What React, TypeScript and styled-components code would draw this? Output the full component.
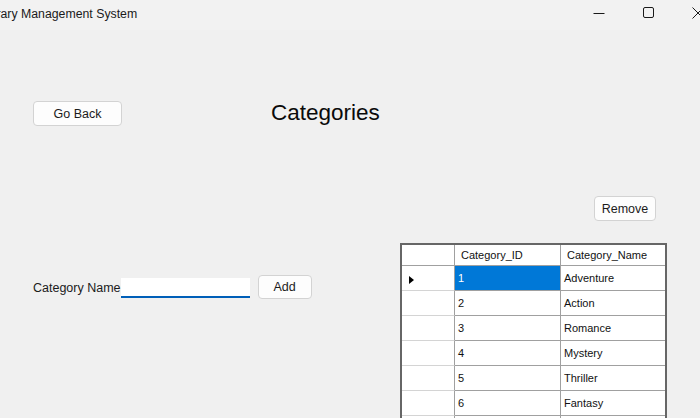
import React from "react";
import styled, { createGlobalStyle } from "styled-components";

const GlobalStyle = createGlobalStyle`
  html, body {
    margin: 0;
    padding: 0;
    background: #f0f0f0;
  }
  body {
    font-family: "Liberation Sans", Arial, sans-serif;
    color: #000;
  }
  * { box-sizing: border-box; }
`;

const Window = styled.div`
  width: 700px;
  height: 418px;
  overflow: hidden;
  background: #f0f0f0;
  display: flex;
  flex-direction: column;
`;

const TitleBar = styled.div`
  height: 30px;
  flex: 0 0 30px;
  display: flex;
  align-items: center;
  background: #f2f2f2;
  overflow: hidden;
`;

const TitleText = styled.div`
  margin-left: -20px;
  margin-top: -2px;
  font-size: 12.3px;
  color: #1a1a1a;
  white-space: nowrap;
  flex: 1;
`;

const Controls = styled.div`
  display: flex;
  margin-right: -22px;
  height: 30px;
`;

const ControlBox = styled.div`
  width: 48px;
  height: 30px;
  display: flex;
  align-items: center;
  justify-content: center;
  margin-top: -2px;
`;

const Body = styled.div`
  flex: 1;
  display: flex;
  flex-direction: column;
  padding: 71px 0 0 33px;
`;

const HeaderRow = styled.div`
  display: flex;
  align-items: center;
  gap: 149px;
`;

const Button = styled.button<{ $w: number; $h: number }>`
  width: ${(p) => p.$w}px;
  height: ${(p) => p.$h}px;
  padding: 0;
  background: #fdfdfd;
  border: 1px solid #d3d3d3;
  border-radius: 4px;
  font-family: "Liberation Sans", Arial, sans-serif;
  font-size: 12.5px;
  color: #1b1b1b;
  flex: 0 0 auto;
`;

const Title = styled.h1`
  margin: 0;
  font-size: 22.5px;
  font-weight: normal;
  color: #0a0a0a;
  line-height: 1;
`;

const ActionRow = styled.div`
  margin-top: 70px;
  display: flex;
  justify-content: flex-end;
  padding-right: 44px;
`;

const Workspace = styled.div`
  margin-top: 22px;
  display: flex;
  align-items: flex-start;
  padding-right: 33px;
`;

const EntryForm = styled.div`
  margin-top: 32px;
  display: flex;
  align-items: center;
`;

const FieldLabel = styled.label`
  font-size: 12.5px;
  color: #1b1b1b;
  white-space: nowrap;
  margin-top: 2px;
`;

const NameInput = styled.input`
  width: 129px;
  height: 20px;
  margin-top: 1px;
  border: none;
  border-bottom: 2px solid #005fb8;
  background: #fff;
  outline: none;
  font-family: "Liberation Sans", Arial, sans-serif;
  font-size: 12px;
  margin-right: 8px;
`;

const GridFrame = styled.div`
  margin-left: auto;
  width: 267px;
  border: 2px solid #666;
  border-bottom: none;
  background: #ababab;
`;

const Table = styled.table`
  width: 263px;
  border-collapse: separate;
  border-spacing: 0;
  table-layout: fixed;
  font-size: 11px;
`;

const HeadCell = styled.th<{ $w: number; $last?: boolean }>`
  width: ${(p) => p.$w}px;
  height: 21px;
  padding: 0 0 0 6px;
  text-align: left;
  font-weight: normal;
  background: #fff;
  color: #111;
  border-bottom: 1px solid #a0a0a0;
  border-right: ${(p) => (p.$last ? "none" : "1px solid #a0a0a0")};
  white-space: nowrap;
`;

const RowHead = styled.th`
  height: 25px;
  padding: 0 0 0 7px;
  text-align: left;
  background: #fff;
  border-bottom: 1px solid #d4d4d4;
  border-right: 1px solid #a0a0a0;
`;

const Cell = styled.td<{ $selected?: boolean; $last?: boolean }>`
  height: 25px;
  padding: 0 0 0 3px;
  background: ${(p) => (p.$selected ? "#0078d7" : "#fff")};
  color: ${(p) => (p.$selected ? "#fff" : "#111")};
  border-bottom: 1px solid #a0a0a0;
  border-right: ${(p) => (p.$last ? "none" : "1px solid #a0a0a0")};
  white-space: nowrap;
`;

const Pointer = styled.span`
  display: inline-block;
  width: 0;
  height: 0;
  border-top: 4px solid transparent;
  border-bottom: 4px solid transparent;
  border-left: 5px solid #000;
  vertical-align: middle;
  margin-top: 2px;
`;

const rows: { id: string; name: string }[] = [
  { id: "1", name: "Adventure" },
  { id: "2", name: "Action" },
  { id: "3", name: "Romance" },
  { id: "4", name: "Mystery" },
  { id: "5", name: "Thriller" },
  { id: "6", name: "Fantasy" },
  { id: "", name: "" },
];

export default function App() {
  return (
    <>
      <GlobalStyle />
      <Window>
        <TitleBar>
          <TitleText>Library Management System</TitleText>
          <Controls>
            <ControlBox>
              <svg width="12" height="12" viewBox="0 0 12 12" style={{ marginLeft: -6 }}>
                <line x1="0.5" y1="6.5" x2="11.5" y2="6.5" stroke="#1a1a1a" strokeWidth="1" />
              </svg>
            </ControlBox>
            <ControlBox>
              <svg width="12" height="12" viewBox="0 0 12 12" style={{ marginLeft: -2 }}>
                <rect x="0.5" y="0.5" width="10" height="10" rx="1.5" fill="none" stroke="#1a1a1a" strokeWidth="1" />
              </svg>
            </ControlBox>
            <ControlBox>
              <svg width="12" height="12" viewBox="0 0 12 12">
                <path d="M0.5 0.5 L11.5 11.5 M11.5 0.5 L0.5 11.5" stroke="#1a1a1a" strokeWidth="1" />
              </svg>
            </ControlBox>
          </Controls>
        </TitleBar>
        <Body>
          <HeaderRow>
            <Button $w={89} $h={25}>Go Back</Button>
            <Title>Categories</Title>
          </HeaderRow>
          <ActionRow>
            <Button $w={62} $h={25}>Remove</Button>
          </ActionRow>
          <Workspace>
            <EntryForm>
              <FieldLabel htmlFor="catname">Category Name</FieldLabel>
              <NameInput id="catname" />
              <Button $w={54} $h={24}>Add</Button>
            </EntryForm>
            <GridFrame>
              <Table>
                <thead>
                  <tr>
                    <HeadCell $w={53} />
                    <HeadCell $w={106}>Category_ID</HeadCell>
                    <HeadCell $w={104} $last>Category_Name</HeadCell>
                  </tr>
                </thead>
                <tbody>
                  {rows.map((r, i) => (
                    <tr key={i}>
                      <RowHead>{i === 0 ? <Pointer /> : null}</RowHead>
                      <Cell $selected={i === 0}>{r.id}</Cell>
                      <Cell $last>{r.name}</Cell>
                    </tr>
                  ))}
                </tbody>
              </Table>
            </GridFrame>
          </Workspace>
        </Body>
      </Window>
    </>
  );
}
